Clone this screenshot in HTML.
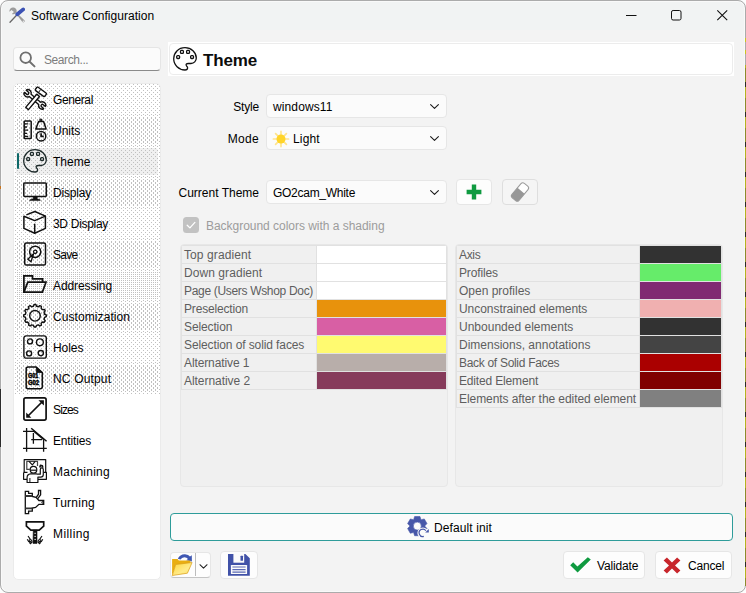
<!DOCTYPE html>
<html lang="en">
<head>
<meta charset="utf-8">
<title>Software Configuration</title>
<style>
*{box-sizing:border-box;margin:0;padding:0}
html,body{width:746px;height:593px;overflow:hidden;background:#fdfdfd}
body{font-family:"Liberation Sans",sans-serif;font-size:12px;color:#000;position:relative}
.abs{position:absolute}
#edge{left:745px;top:38px;width:1px;height:548px;background:linear-gradient(#c9c620 0 4px,#ababab 4px 12px,#c9c620 12px 16px,#ababab 16px 27px,transparent 27px),repeating-linear-gradient(#8d8a2c 0 14px,#2a2a26 14px 19px,#b5b320 19px 30px)}
#win{left:0;top:0;width:746px;height:593px;background:#f3f3f3;border-radius:8px;overflow:hidden}
#frame{left:0;top:0;width:746px;height:593px;border:1px solid #ababab;border-radius:8px;box-shadow:inset 0 0 0 1px #f9f9f9;pointer-events:none}
#tbar{left:0;top:0;width:746px;height:30px;background:#f1f3f3}
.t{position:absolute;white-space:nowrap;line-height:14px;height:14px}
/* title bar */
#ttl{left:31px;top:9px}
/* search */
#search{left:13px;top:47px;width:148px;height:24px;background:#fbfbfb;border:1px solid #e5e5e5;border-bottom-color:#8a8a8a;border-radius:4px}
#search .t{left:30px;top:5px;color:#7d7d7d}
/* header */
#hdr{left:168px;top:42px;width:566px;height:34px;background:#fff}
#hdr .in{position:absolute;left:1px;top:1px;right:1px;bottom:1px;border:1px solid #ececec;border-radius:4px}
#hdr .t{left:35px;top:9px;font-size:17px;font-weight:bold;line-height:20px;height:20px;color:#0c0c0c}
/* list */
#list{left:13px;top:83px;width:148px;height:497px;background:#fff;border:1px solid #ebebeb;border-radius:5px;overflow:hidden}
.it{position:absolute;left:0;width:146px;height:31px}
.it svg{position:absolute;left:9px;top:3px;width:24px;height:24px;overflow:visible}
.it .t{left:39px;top:9px;line-height:15px;height:15px}
/* combos */
.cb{position:absolute;left:266px;width:181px;height:24px;background:#fbfbfb;border:1px solid #e6e6e6;border-radius:4px}
.cb .t{left:6px;top:5px}
.cb svg.chev{position:absolute;left:163px;top:9px;width:9px;height:5px}
.lbl{position:absolute;white-space:nowrap;line-height:14px;height:14px;text-align:right;width:100px;left:159px}
.btn{position:absolute;background:#fdfdfd;border:1px solid #e6e6e6;border-radius:4px}
/* tables */
.tbl{position:absolute;top:244px;width:268px;height:243px;background:#f0f0f0;border:1px solid #e7e7e7;border-radius:4px;overflow:hidden}
.grid{position:absolute;left:0;top:0;width:266px;background:#e1e1e1}
.row{position:absolute;left:1px;width:264px;height:17px;background:#f0f0f0}
.row .t{left:2px;top:2px;color:#5e5e5e}
.row i{position:absolute;top:0;height:17px;display:block;border-left:1px solid #e1e1e1}
#tl .row i{left:134px;width:130px}
#tr .row i{left:182px;width:82px}
</style>
</head>
<body>
<div id="win" class="abs">
<div id="tbar" class="abs"></div>
<!-- title bar -->
<svg class="abs" style="left:9px;top:7px;width:16px;height:16px" viewBox="0 0 16 16">
<path d="M4.600,0.500 A3.600,3.600 0 0 0 0.500,4.700 L2.600,2.900 L4.900,4.900 L2.900,7 A3.600,3.600 0 0 0 6.600,6.300 L13.400,15 A1.350,1.350 0 0 0 15.400,13.200 L7.400,5.400 A3.600,3.600 0 0 0 4.600,0.500 Z" fill="#9c9c9c"/>
<circle cx="14.300" cy="14.200" r="0.700" fill="#f1f3f3"/>
<path d="M7.800,8 L1,15.200" stroke="#686868" stroke-width="1.300" stroke-linecap="round"/>
<path d="M8.300,7.300 L14.200,2.400" stroke="#3b52b4" stroke-width="3.800" stroke-linecap="round"/>
</svg>
<div id="ttl" class="t" style="letter-spacing:0.056px">Software Configuration</div>
<svg class="abs" style="left:620px;top:4px;width:116px;height:24px" viewBox="0 0 116 24" fill="none" stroke="#111" stroke-width="1">
<path d="M6 11.5 H16.5"/>
<rect x="51.5" y="6.5" width="9.5" height="9.500" rx="1.6"/>
<path d="M97.300 6.300 L107.200 16.200 M107.200 6.300 L97.300 16.200" stroke-width="1.1"/>
</svg>
<!-- search -->
<div id="search" class="abs">
<svg class="abs" style="left:4px;top:1px;width:20px;height:20px" viewBox="0 0 20 20" fill="none" stroke="#707070" stroke-width="1.800" stroke-linecap="round"><circle cx="7.700" cy="8.700" r="5.300"/><path d="M11.700 12.700 L16.500 17.400" stroke-width="2"/></svg>
<div class="t" style="letter-spacing:-0.415px">Search...</div>
</div>
<!-- header -->
<div id="hdr" class="abs"><div class="in"></div>
<svg class="abs" style="left:5px;top:5px;width:24px;height:24px" viewBox="0 0 24 24" fill="none" stroke="#111" stroke-width="1.300">
<path d="M12,0.700 C5.500,0.700 0.700,5.700 0.700,11.800 C0.700,18 5.800,23 12,23 C13.600,23 14.600,22 14.600,20.800 C14.600,20 14.100,19.500 13.600,19 C13,18.300 12.800,17.600 13.400,17 C14,16.400 15,16.500 16,16.500 L18,16.500 C21,16.500 23.300,14 23.300,11 C23.300,5.300 18.200,0.700 12,0.700 Z"/>
<rect x="7.500" y="3.400" width="2.900" height="2.900" rx="0.900"/><rect x="13.600" y="3.400" width="2.900" height="2.900" rx="0.900"/><rect x="3.700" y="8.600" width="2.900" height="2.900" rx="0.900"/><rect x="17.600" y="8.600" width="2.900" height="2.900" rx="0.900"/>
</svg>
<div class="t" style="letter-spacing:-0.149px">Theme</div>
</div>
<div id="list" class="abs">
<svg class="abs" id="dots" style="left:0;top:0;width:146px;height:310px" viewBox="14 84 146 310" shape-rendering="crispEdges">
<pattern id="pA" x="0" y="0" width="4" height="4" patternUnits="userSpaceOnUse"><rect x="1" y="0" width="1" height="1" fill="#c0c0c0"/><rect x="3" y="2" width="1" height="1" fill="#c0c0c0"/></pattern>
<pattern id="pB" x="0" y="1" width="4" height="4" patternUnits="userSpaceOnUse"><rect x="1" y="0" width="1" height="1" fill="#c0c0c0"/><rect x="3" y="2" width="1" height="1" fill="#c0c0c0"/></pattern>
<pattern id="pC" x="0" y="2" width="4" height="4" patternUnits="userSpaceOnUse"><rect x="1" y="0" width="1" height="1" fill="#c0c0c0"/><rect x="3" y="2" width="1" height="1" fill="#c0c0c0"/></pattern>
<pattern id="pD" x="0" y="3" width="4" height="4" patternUnits="userSpaceOnUse"><rect x="1" y="0" width="1" height="1" fill="#c0c0c0"/><rect x="3" y="2" width="1" height="1" fill="#c0c0c0"/></pattern>
<rect x="14" y="84" width="146" height="31" fill="url(#pA)"/>
<rect x="16" y="86" width="142" height="27" fill="url(#pA)"/>
<rect x="14" y="115" width="146" height="31" fill="url(#pD)"/>
<rect x="16" y="117" width="142" height="27" fill="url(#pA)"/>
<rect x="14" y="146" width="146" height="31" fill="url(#pC)"/>
<rect x="16" y="148" width="142" height="27" rx="3.500" fill="#f0f0f0" shape-rendering="auto"/>
<rect x="16" y="148" width="142" height="27" rx="3.500" fill="url(#pC)"/>
<rect x="14" y="177" width="146" height="31" fill="url(#pB)"/>
<rect x="16" y="179" width="142" height="27" fill="url(#pA)"/>
<rect x="14" y="208" width="146" height="31" fill="url(#pA)"/>
<rect x="16" y="210" width="142" height="27" fill="url(#pA)"/>
<rect x="14" y="239" width="146" height="31" fill="url(#pD)"/>
<rect x="16" y="241" width="142" height="27" fill="url(#pA)"/>
<rect x="14" y="270" width="146" height="31" fill="url(#pC)"/>
<rect x="16" y="272" width="142" height="27" fill="url(#pA)"/>
<rect x="14" y="301" width="146" height="31" fill="url(#pB)"/>
<rect x="16" y="303" width="142" height="27" fill="url(#pA)"/>
<rect x="14" y="332" width="146" height="31" fill="url(#pA)"/>
<rect x="16" y="334" width="142" height="27" fill="url(#pA)"/>
<rect x="14" y="363" width="146" height="31" fill="url(#pD)"/>
<rect x="16" y="365" width="142" height="27" fill="url(#pA)"/>
</svg>
<div class="abs" style="left:3px;top:69px;width:2px;height:16px;border-radius:1px;background:#0d6868"></div>
<div class="it" style="top:0"><svg viewBox="0 0 24 24" fill="none" stroke="#111" stroke-width="1.4" stroke-linejoin="round">
<g transform="translate(11.900,12.400) rotate(40)"><path d="M-6.200,-1.500 A3.700,3.700 0 0 0 -12.500,-2.300 L-12.500,-1.350 L-9.800,-1.350 A1.350,1.350 0 0 1 -9.800,1.350 L-12.500,1.350 L-12.500,2.300 A3.700,3.700 0 0 0 -6.200,1.500 L6.200,1.500 A3.700,3.700 0 0 0 12.500,2.300 L12.500,1.350 L9.800,1.350 A1.350,1.350 0 0 1 9.800,-1.350 L12.500,-1.350 L12.500,-2.300 A3.700,3.700 0 0 0 6.200,-1.500 Z"/></g>
<rect x="1" y="13.100" width="17.200" height="3.600" fill="#fff" transform="rotate(-50 9.600 14.900)"/>
<rect x="12" y="2.700" width="11.700" height="4.200" rx="1" fill="#fff" transform="rotate(36 17.850 4.800)"/>
<path d="M17.600,2.600 L15.600,5.400" stroke-width="1"/>
</svg><div class="t" style="letter-spacing:-0.4px">General</div></div>
<div class="it" style="top:31px"><svg viewBox="0 0 24 24" fill="none" stroke="#111" stroke-width="1.5" stroke-linejoin="round">
<rect x="1.200" y="3" width="7" height="17.600" rx="0.800"/>
<path d="M1.500,5.800 H5.200 M1.500,9 H4 M1.500,12.200 H5.200 M1.500,15.400 H4 M1.500,18.400 H5.200" stroke-width="1.300"/>
<path d="M15.600,3.600 H20.600 L23.100,11 H12.800 Z"/>
<circle cx="17.900" cy="2" r="1" stroke-width="1.200"/>
<circle cx="18.100" cy="18.200" r="4.700"/>
<path d="M18.100,15.200 V18.400 H20.800" stroke-width="1.700"/>
</svg><div class="t" style="letter-spacing:-0.029px">Units</div></div>
<div class="it" style="top:62px"><svg viewBox="0 0 24 24" fill="none" stroke="#1d2a2a" stroke-width="1.300">
<path d="M12,0.700 C5.500,0.700 0.700,5.700 0.700,11.800 C0.700,18 5.800,23 12,23 C13.600,23 14.600,22 14.600,20.800 C14.600,20 14.100,19.500 13.600,19 C13,18.300 12.800,17.600 13.400,17 C14,16.400 15,16.500 16,16.500 L18,16.500 C21,16.500 23.300,14 23.300,11 C23.300,5.300 18.200,0.700 12,0.700 Z"/>
<rect x="7.500" y="3.400" width="2.900" height="2.900" rx="0.900"/><rect x="13.600" y="3.400" width="2.900" height="2.900" rx="0.900"/><rect x="3.700" y="8.600" width="2.900" height="2.900" rx="0.900"/><rect x="17.600" y="8.600" width="2.900" height="2.900" rx="0.900"/>
</svg><div class="t">Theme</div></div>
<div class="it" style="top:93px"><svg viewBox="0 0 24 24" fill="none" stroke="#111" stroke-width="1.500" stroke-linejoin="round">
<rect x="0.800" y="2.900" width="22.500" height="13.500" rx="0.800"/>
<path d="M10.200,16.400 H14.200 V18.800 L17.200,19.800 V20.600 H6.800 V19.800 L10.200,18.800 Z" fill="#111" stroke-width="0.500"/>
</svg><div class="t" style="letter-spacing:-0.194px">Display</div></div>
<div class="it" style="top:124px"><svg viewBox="0 0 24 24" fill="none" stroke="#111" stroke-width="1.500" stroke-linejoin="round" stroke-linecap="round">
<path d="M3.900,3.600 L11.900,0.500 L22.400,5.100 L11.700,9.600 L0.900,5.300 V17.400 L11.700,22.200 L22.400,17.400 V5.100 M11.700,13.300 V22.200"/>
</svg><div class="t" style="letter-spacing:-0.303px">3D Display</div></div>
<div class="it" style="top:155px"><svg viewBox="0 0 24 24" fill="none" stroke="#111" stroke-width="1.500" stroke-linejoin="round">
<rect x="1.700" y="0.900" width="20.800" height="22.200" rx="1.600"/>
<circle cx="12.200" cy="9.800" r="5.600"/><circle cx="12.200" cy="9.800" r="1.700" stroke-width="1.300"/>
<path d="M10.600,11.800 L4.800,17.300 L8,19.800 Z" stroke-width="1.300"/>
</svg><div class="t" style="letter-spacing:-0.715px">Save</div></div>
<div class="it" style="top:186px"><svg viewBox="0 0 24 24" fill="none" stroke="#111" stroke-width="1.700" stroke-linejoin="miter">
<path d="M0.900,19.100 V2.900 H9.500 V5.800 H19.600 V9.100"/>
<path d="M4.800,9.200 H23 L19.400,19.100 H0.900 Z"/>
</svg><div class="t" style="letter-spacing:-0.105px">Addressing</div></div>
<div class="it" style="top:217px"><svg viewBox="0 0 24 24" fill="none" stroke="#111" stroke-width="1.400" stroke-linejoin="round">
<path d="M10.43,2.23 L11.11,0.53 L12.89,0.53 L13.57,2.23 L15.43,2.73 L16.86,1.60 L18.40,2.49 L18.14,4.29 L19.51,5.66 L21.31,5.40 L22.20,6.94 L21.07,8.37 L21.57,10.23 L23.27,10.91 L23.27,12.69 L21.57,13.37 L21.07,15.23 L22.20,16.66 L21.31,18.20 L19.51,17.94 L18.14,19.31 L18.40,21.11 L16.86,22.00 L15.43,20.87 L13.57,21.37 L12.89,23.07 L11.11,23.07 L10.43,21.37 L8.57,20.87 L7.14,22.00 L5.60,21.11 L5.86,19.31 L4.49,17.94 L2.69,18.20 L1.80,16.66 L2.93,15.23 L2.43,13.37 L0.73,12.69 L0.73,10.91 L2.43,10.23 L2.93,8.37 L1.80,6.94 L2.69,5.40 L4.49,5.66 L5.86,4.29 L5.60,2.49 L7.14,1.60 L8.57,2.73 Z"/>
<circle cx="12" cy="11.800" r="5.300"/>
</svg><div class="t" style="letter-spacing:0.082px">Customization</div></div>
<div class="it" style="top:248px"><svg viewBox="0 0 24 24" fill="none" stroke="#111" stroke-width="1.400">
<rect x="0.900" y="0.900" width="22.400" height="22.200" rx="2.200"/>
<circle cx="7" cy="6.400" r="2.500"/><circle cx="16.900" cy="7.300" r="3.400"/><circle cx="6.100" cy="18.400" r="2.500"/><circle cx="17.800" cy="18.100" r="2.600"/>
</svg><div class="t" style="letter-spacing:-0.057px">Holes</div></div>
<div class="it" style="top:279px"><svg viewBox="0 0 24 24" fill="none" stroke="#111" stroke-width="1.500" stroke-linejoin="round">
<path d="M13.200,1.100 H5.200 Q3.200,1.100 3.200,3.100 V20.800 Q3.200,22.800 5.200,22.800 H17.300 Q19.300,22.800 19.300,20.800 V6.600 Z"/>
<path d="M13.400,1.300 L19.100,6.500 H13.400 Z" fill="#111" stroke-width="0.800"/>
<text x="5" y="11.500" font-family="Liberation Sans,sans-serif" font-size="6.300" font-weight="bold" fill="#000" stroke="#000" stroke-width="0.450" textLength="10.200" lengthAdjust="spacingAndGlyphs">G01</text>
<text x="5" y="18.500" font-family="Liberation Sans,sans-serif" font-size="6.300" font-weight="bold" fill="#000" stroke="#000" stroke-width="0.450" textLength="11" lengthAdjust="spacingAndGlyphs">G02</text>
</svg><div class="t" style="letter-spacing:0.166px">NC Output</div></div>
<div class="it" style="top:310px"><svg viewBox="0 0 24 24" fill="none" stroke="#111" stroke-width="1.700">
<rect x="0.900" y="0.900" width="22.200" height="22.200" rx="1.800"/>
<path d="M5,19 L19,5"/>
<path d="M20.900,3.200 H15.400 L20.900,8.400 Z M3.200,20.800 V15.400 L8.400,20.800 Z" fill="#111" stroke="none"/>
</svg><div class="t" style="letter-spacing:-0.869px">Sizes</div></div>
<div class="it" style="top:341px"><svg viewBox="0 0 24 24" fill="none" stroke="#111" stroke-width="1.300">
<path d="M3.600,0 V23.800 M0,3.400 H11 M0,20.400 H23.800 M20.600,11.200 V23.800 M10.400,5.100 V15.800 M8.200,11.600 H19"/>
<path d="M8.200,0.200 L23.600,13.200" stroke-width="1.500"/><path d="M11,3.400 L20.600,11.400" stroke-width="1.500"/>
</svg><div class="t" style="letter-spacing:-0.17px">Entities</div></div>
<div class="it" style="top:372px"><svg viewBox="0 0 24 24" fill="none" stroke="#111" stroke-width="1.200" stroke-linejoin="round">
<path d="M1.200,13.200 V0.600 H22.700 V13.200"/>
<path d="M6.800,10.400 H3.800 V2.400 H14.500 V7" stroke="#444"/>
<path d="M6,2.400 L9.300,5.800 L12.200,2.400"/>
<path d="M0.600,13.400 H4.500 M20.500,13.400 H23.400 V20.300 H15 M4.100,20.300 H0.600 V13.400"/>
<path d="M4.100,23.500 V18.500 Q4.100,15.200 7.600,14.900 H13.400 L14.400,15.200 H17.300 V10.400 Q17.300,8.900 18.800,8.900 Q20.300,8.900 20.300,10.400 V15.600 Q20.300,18.200 17.600,18.200 H14.900 V23.500 Z" fill="#fff"/>
<path d="M6.900,19 V23.500" stroke-width="1"/>
<circle cx="10.500" cy="10.700" r="3.300" fill="#fff"/><path d="M7.300,11.200 H13.700"/>
<path d="M16.800,8.400 L17.400,6.400 L19.400,6.800 L19.800,8.600" stroke-width="1.600"/>
</svg><div class="t" style="letter-spacing:0.244px">Machining</div></div>
<div class="it" style="top:403px"><svg viewBox="0 0 24 24" fill="none" stroke="#111" stroke-width="1.300" stroke-linejoin="miter">
<path d="M2.300,1.300 H5.600 V3.400 H9.300 V6.400 L13,7.400 L15.900,10.500 H20.700 V14.300 H15.900 L12.600,17.400 L9.300,18 V21.100 H5.600 V23.700 H2.300 Z"/>
<path d="M2.300,6 H9.300 M2.300,18.400 H9.300" stroke-width="1.800" stroke="#333"/>
<path d="M13.300,7.400 L15.500,4.200 V0.500 H17.600 V4.800 L14.800,8.600"/>
<path d="M20.600,11 L18.600,12.400 L20.600,13.800" stroke-width="1"/>
</svg><div class="t" style="letter-spacing:0.25px">Turning</div></div>
<div class="it" style="top:434px"><svg viewBox="0 0 24 24" fill="none" stroke="#111" stroke-width="1.700" stroke-linejoin="miter">
<path d="M3.400,0.900 H20.700 V5.100 L16.200,9.100 H7.900 L3.400,5.100 Z"/>
<path d="M10.300,9.100 H14 V22.400 H10 Z" fill="#111" stroke-width="0.600"/>
<path d="M11.300,12.300 H13 M11.300,15.400 H13 M11.300,18.400 H13" stroke="#ddd" stroke-width="0.900"/>
<path d="M5,15 L7.400,18.400 L6.400,19 L8.600,22.400 M4.200,18.200 L5.600,20.400 L7.600,20.800 M6,21.400 L8,23 M8.400,18.600 L9.200,21.600 M19,15 L16.600,18.400 L17.600,19 L15.400,22.400 M19.800,18.200 L18.400,20.400 L16.400,20.800 M18,21.400 L16,23 M15.600,18.600 L14.800,21.600" stroke-width="1.100"/>
</svg><div class="t" style="letter-spacing:0.412px">Milling</div></div>
</div>

<div class="lbl" style="letter-spacing:-0.177px;top:100px">Style</div>
<div class="cb" style="top:94px"><div class="t" style="letter-spacing:0.118px">windows11</div><svg class="chev" viewBox="0 0 9 5" fill="none" stroke="#1a1a1a" stroke-width="1.100" stroke-linecap="round" stroke-linejoin="round"><path d="M0.600,0.600 L4.500,4.400 L8.400,0.600"/></svg></div>
<div class="lbl" style="letter-spacing:0.317px;top:132px">Mode</div>
<div class="cb" style="top:126px"><svg class="abs" style="left:5px;top:3px;width:18px;height:18px" viewBox="-9 -9 18 18"><g stroke="#ffe48c" stroke-width="1.700" stroke-linecap="round"><path d="M0,-7.600 V7.600 M-7.600,0 H7.600 M-5.400,-5.400 L5.400,5.400 M-5.400,5.400 L5.400,-5.400"/></g><circle r="4.500" fill="#ffd428"/></svg><div class="t" style="letter-spacing:0.164px;left:26px">Light</div><svg class="chev" viewBox="0 0 9 5" fill="none" stroke="#1a1a1a" stroke-width="1.100" stroke-linecap="round" stroke-linejoin="round"><path d="M0.600,0.600 L4.500,4.400 L8.400,0.600"/></svg></div>
<div class="lbl" style="top:186px">Current Theme</div>
<div class="cb" style="top:180px"><div class="t" style="letter-spacing:-0.276px">GO2cam_White</div><svg class="chev" viewBox="0 0 9 5" fill="none" stroke="#1a1a1a" stroke-width="1.100" stroke-linecap="round" stroke-linejoin="round"><path d="M0.600,0.600 L4.500,4.400 L8.400,0.600"/></svg></div>
<div class="btn" style="left:456px;top:179px;width:36px;height:26px"><svg class="abs" style="left:9px;top:4px;width:16px;height:16px" viewBox="0 0 16 16"><path d="M5.800,0.600 H10.200 V5.800 H15.400 V10.200 H10.200 V15.400 H5.800 V10.200 H0.600 V5.800 H5.800 Z" fill="#0f9a40"/></svg></div>
<div class="btn" style="left:502px;top:179px;width:36px;height:26px;background:#f5f5f5;border-color:#dedede"><svg class="abs" style="left:6px;top:1px;width:22px;height:22px" viewBox="0 0 22 22"><g transform="rotate(-50 11 11)"><rect x="1.600" y="6.400" width="18.800" height="9.200" rx="2.400" fill="#fff" stroke="#9a9a9a" stroke-width="1"/><path d="M4,6.400 H12.600 V15.600 H4 Q1.600,15.600 1.600,13.200 V8.800 Q1.600,6.400 4,6.400 Z" fill="#979797"/></g></svg></div>
<div class="abs" style="left:183px;top:217px;width:16px;height:16px;border-radius:3.500px;background:#c2c2c2"><svg class="abs" style="left:0;top:0;width:16px;height:16px" viewBox="0 0 16 16" fill="none" stroke="#fff" stroke-width="1.300" stroke-linecap="round" stroke-linejoin="round"><path d="M4.200,8.200 L6.900,10.900 L11.900,5.400"/></svg></div>
<div class="t" style="letter-spacing:-0.028px;left:206px;top:219px;color:#9c9c9c">Background colors with a shading</div>

<div id="tl" class="tbl" style="left:180px">
<div class="grid" style="height:145px">
<div class="row" style="top:1px"><div class="t" style="letter-spacing:0.1px">Top gradient</div><i style="background:#fff"></i></div>
<div class="row" style="top:19px"><div class="t" style="letter-spacing:0.066px">Down gradient</div><i style="background:#fff"></i></div>
<div class="row" style="top:37px"><div class="t" style="letter-spacing:-0.32px">Page (Users Wshop Doc)</div><i style="background:#fff"></i></div>
<div class="row" style="top:55px"><div class="t" style="letter-spacing:-0.171px">Preselection</div><i style="background:#e8920c"></i></div>
<div class="row" style="top:73px"><div class="t" style="letter-spacing:-0.125px">Selection</div><i style="background:#d85fa4"></i></div>
<div class="row" style="top:91px"><div class="t" style="letter-spacing:-0.104px">Selection of solid faces</div><i style="background:#fffa70"></i></div>
<div class="row" style="top:109px"><div class="t" style="letter-spacing:-0.112px">Alternative 1</div><i style="background:#b8aeaa"></i></div>
<div class="row" style="top:127px"><div class="t" style="letter-spacing:-0.054px">Alternative 2</div><i style="background:#863b5b"></i></div>
</div>
</div>
<div id="tr" class="tbl" style="left:455px">
<div class="grid" style="height:163px">
<div class="row" style="top:1px"><div class="t" style="letter-spacing:-0.343px">Axis</div><i style="background:#323232"></i></div>
<div class="row" style="top:19px"><div class="t" style="letter-spacing:-0.152px">Profiles</div><i style="background:#66ec6a"></i></div>
<div class="row" style="top:37px"><div class="t">Open profiles</div><i style="background:#802a72"></i></div>
<div class="row" style="top:55px"><div class="t" style="letter-spacing:-0.05px">Unconstrained elements</div><i style="background:#f0b0b0"></i></div>
<div class="row" style="top:73px"><div class="t" style="letter-spacing:0.011px">Unbounded elements</div><i style="background:#323232"></i></div>
<div class="row" style="top:91px"><div class="t">Dimensions, annotations</div><i style="background:#444444"></i></div>
<div class="row" style="top:109px"><div class="t" style="letter-spacing:-0.303px">Back of Solid Faces</div><i style="background:#aa0000"></i></div>
<div class="row" style="top:127px"><div class="t" style="letter-spacing:-0.164px">Edited Element</div><i style="background:#800000"></i></div>
<div class="row" style="top:145px"><div class="t" style="letter-spacing:-0.072px">Elements after the edited element</div><i style="background:#808080"></i></div>
</div>
</div>

<div class="btn" style="left:170px;top:513px;width:563px;height:28px;border-color:#2e9c9a;background:#fbfbfb">
<svg class="abs" style="left:236px;top:1px;width:24px;height:24px" viewBox="0 0 24 24"><path d="M6.71,4.40 L7.61,1.47 L12.99,1.47 L13.89,4.40 L14.30,4.64 L17.30,3.96 L19.99,8.61 L17.90,10.86 L17.90,11.34 L19.99,13.59 L17.30,18.24 L14.30,17.56 L13.89,17.80 L12.99,20.73 L7.61,20.73 L6.71,17.80 L6.30,17.56 L3.30,18.24 L0.61,13.59 L2.70,11.34 L2.70,10.86 L0.61,8.61 L3.30,3.96 L6.30,4.64 Z M6.30,11.10 a4.00,4.00 0 1 0 8.00,0 a4.00,4.00 0 1 0 -8.00,0 Z" fill="#4757a9" fill-rule="evenodd" stroke="#4757a9" stroke-width="0.600" stroke-linejoin="round"/><circle cx="15.900" cy="17.900" r="5.500" fill="#fbfbfb"/><path d="M16.80,21.41 A3.70,3.70 0 1 1 18.87,15.72" fill="none" stroke="#4757a9" stroke-width="1.200"/><path d="M21.800,13.900 V17.500 H18.200 Z" fill="#4757a9"/></svg>
<div class="t" style="letter-spacing:0.1px;left:263px;top:7px">Default init</div></div>
<div class="btn" style="left:170px;top:552px;width:41px;height:26px;border-bottom-color:#c4c4c4">
<svg class="abs" style="left:0;top:0;width:24px;height:24px" viewBox="0 0 24 24">
<linearGradient id="fg" x1="0" y1="0" x2="1" y2="1"><stop offset="0" stop-color="#ffd53a"/><stop offset="0.600" stop-color="#ffeb8a"/><stop offset="1" stop-color="#ffe060"/></linearGradient>
<path d="M6.800,5.800 Q9,1 14,1.200 Q17.600,1.400 19,3.600 L20.800,2.300 L20.900,8.600 L15.200,7.300 L17,5.900 Q15.600,4.200 13.400,4.200 Q10.600,4.400 9.600,6.600 Z" fill="#3f57b2"/>
<path d="M1.100,22.600 V6 H6.600 L7.800,7.400 H19.400 V11 L4.800,11.800 Z" fill="#e9ae12"/>
<path d="M1.300,22.500 L4.700,11.500 L21.100,9.500 L16.400,20.200 Z" fill="url(#fg)" stroke="#d99c14" stroke-width="0.700" stroke-linejoin="round"/>
</svg>
<div class="abs" style="left:24px;top:0;width:1px;height:23px;background:#bcbcbc"></div>
<svg class="abs" style="left:28px;top:11px;width:9px;height:5px" viewBox="-0.300 -0.200 9.600 5.400" fill="none" stroke="#1a1a1a" stroke-width="1.100" stroke-linecap="round" stroke-linejoin="round"><path d="M0.600,0.600 L4.500,4.300 L8.400,0.600"/></svg>
</div>
<div class="btn" style="left:220px;top:551px;width:38px;height:28px">
<svg class="abs" style="left:7px;top:2px;width:22px;height:22px" viewBox="0 0 22 22"><path d="M0,0 H17.400 L21.800,4.200 V21.800 H0 Z" fill="#4152a8"/><rect x="5.400" y="0" width="10.800" height="8.700" fill="#fbfbfb"/><rect x="12.500" y="1.700" width="2.500" height="5.100" rx="0.500" fill="#4152a8"/><rect x="2.900" y="10.900" width="16.200" height="9.100" rx="0.600" fill="#fbfbfb"/><path d="M4.400,13 H17.600 M4.400,15.600 H17.600 M4.400,18.200 H17.600" stroke="#5a69b4" stroke-width="1.200"/></svg>
</div>
<div class="btn" style="left:563px;top:551px;width:82px;height:28px">
<svg class="abs" style="left:5px;top:4px;width:23px;height:18px" viewBox="0 0 23 18"><path d="M1.200,9.200 L4.200,6.200 L8.400,10.400 L18.800,1.200 L21.800,3.600 L8.600,16.600 Z" fill="#0f9a40"/></svg>
<div class="t" style="letter-spacing:-0.161px;left:33px;top:7px">Validate</div></div>
<div class="btn" style="left:655px;top:551px;width:77px;height:28px">
<svg class="abs" style="left:7px;top:5px;width:18px;height:17px" viewBox="0 0 18 17"><path d="M0.600,3.400 L3.900,0.600 L9,5.600 L14.100,0.600 L17.400,3.400 L12,8.500 L17.400,13.600 L14.100,16.400 L9,11.400 L3.900,16.400 L0.600,13.600 L6,8.500 Z" fill="#c8262c"/></svg>
<div class="t" style="letter-spacing:-0.193px;left:32px;top:7px">Cancel</div></div>

</div>
<div id="frame" class="abs"></div>
<div id="edge" class="abs"></div>
<div class="abs" style="left:0;top:389px;width:1px;height:58px;background:#2b2b2b"></div>
<div class="abs" style="left:0;top:186px;width:1px;height:3px;background:#c8741c"></div>
</body>
</html>
